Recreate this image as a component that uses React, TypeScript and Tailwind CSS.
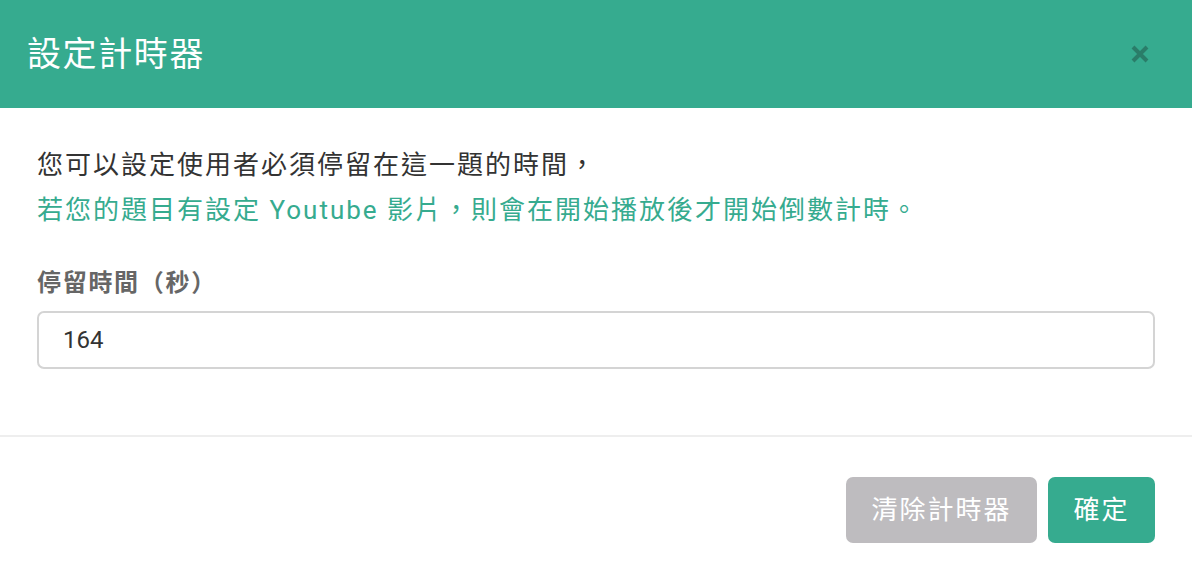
import React from 'react'

const FONT = { fontFamily: 'Roboto, "Noto Sans CJK TC", sans-serif' }

export default function App() {
  return (
    <div className="flex h-[580px] w-[1192px] flex-col bg-white" style={FONT}>
      <div className="flex h-[108px] shrink-0 items-center justify-between bg-[#36ab8f] pl-[27px] pr-[40px]">
        <h1 className="text-[34px] leading-none tracking-[1.6px] text-white">設定計時器</h1>
        <button type="button" className="flex h-[24px] w-[24px] items-center justify-center text-[#2a7d69]">
          <svg width="20" height="20" viewBox="0 0 20 20" fill="none" stroke="currentColor" strokeWidth="4" strokeLinecap="butt">
            <path d="M3 3 L17 17 M17 3 L3 17" />
          </svg>
        </button>
      </div>

      <div className="flex flex-col px-[37px]">
        <div className="pt-[35px] text-[26px] leading-[45px] tracking-[2px]">
          <p className="text-[#333333]">您可以設定使用者必須停留在這一題的時間，</p>
          <p className="text-[#36ab8f]">若您的題目有設定 Youtube 影片，則會在開始播放後才開始倒數計時。</p>
        </div>
        <label className="mt-[33px] text-[24px] font-bold leading-[34px] tracking-[1.7px] text-[#666666]">
          停留時間（秒）
        </label>
        <input
          defaultValue="164"
          className="mt-[11px] h-[58px] w-full rounded-[7px] border-2 border-[#d4d4d4] px-[24px] text-[24px] text-[#333333] outline-none"
        />
      </div>

      <div className="mt-[66px] h-[2px] w-full bg-[#eeeeee]" />

      <div className="flex justify-end gap-[11px] px-[37px] pt-[40px]">
        <button type="button" className="h-[66px] w-[191px] rounded-[7px] bg-[#bebcbf] text-[26px] tracking-[2px] text-white">
          清除計時器
        </button>
        <button type="button" className="h-[66px] w-[107px] rounded-[7px] bg-[#36ab8f] text-[26px] tracking-[2px] text-white">
          確定
        </button>
      </div>
    </div>
  )
}
